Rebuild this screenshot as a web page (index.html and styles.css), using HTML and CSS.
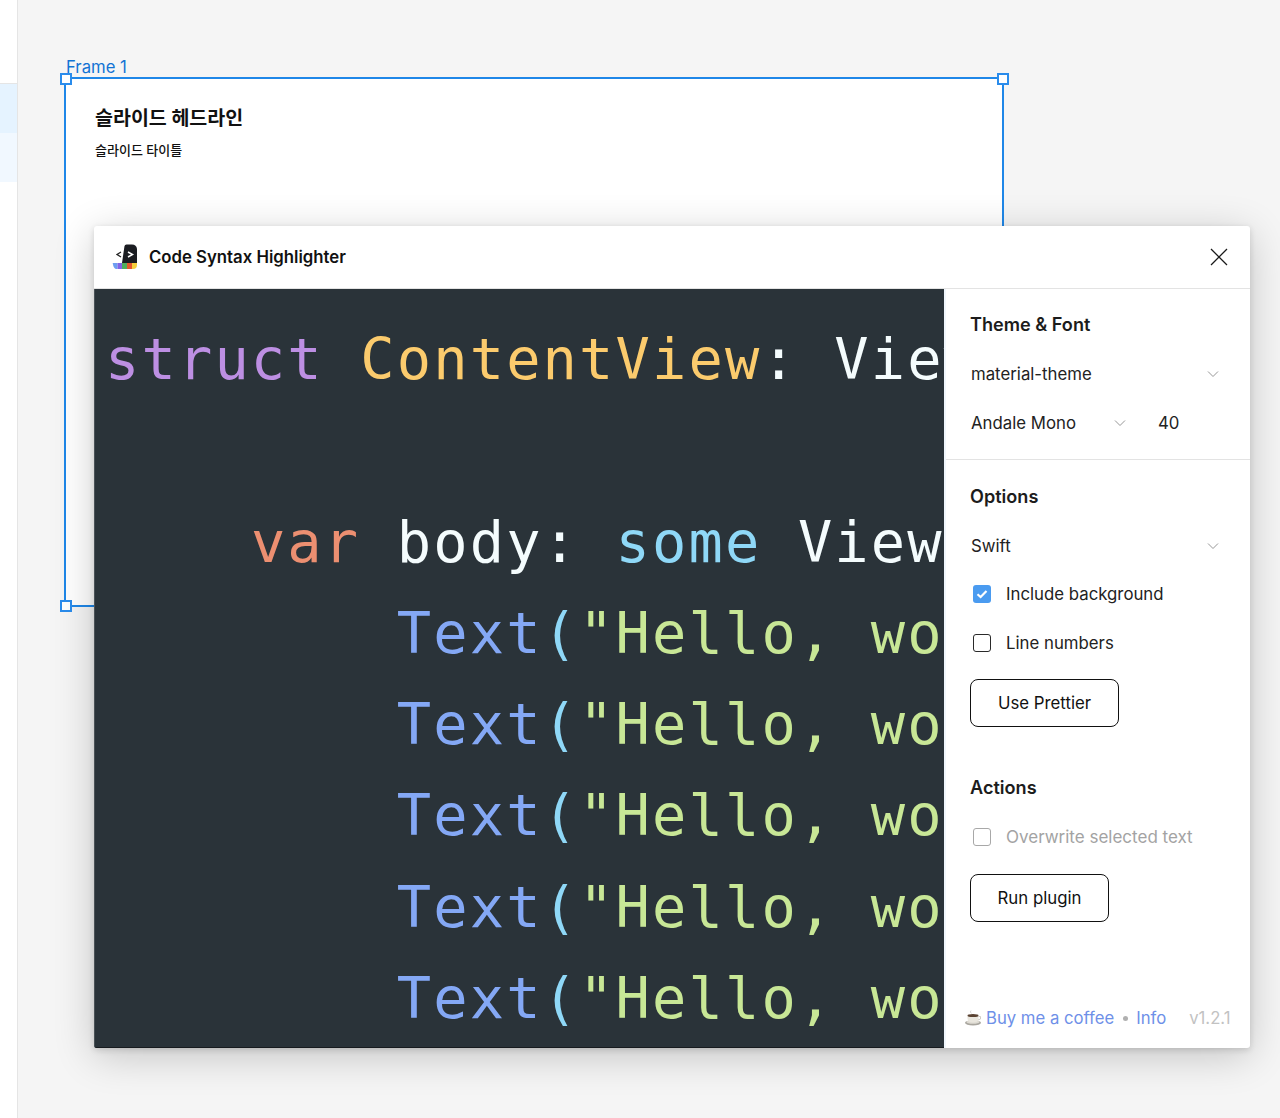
FILE: index.html
```html
<!DOCTYPE html>
<html lang="ko">
<head>
<meta charset="utf-8">
<title>Code Syntax Highlighter</title>
<link rel="stylesheet" href="styles.css">
</head>
<body>
<aside class="sidebar">
  <div class="side-top"></div>
  <div class="side-row side-row-a"></div>
  <div class="side-row side-row-b"></div>
</aside>
<main class="canvas">
  <section class="frame">
    <span class="frame-label">Frame 1</span>
    <span class="handle handle-tl"></span>
    <span class="handle handle-tr"></span>
    <span class="handle handle-bl"></span>
    <h1 class="slide-title">슬라이드 헤드라인</h1>
    <p class="slide-sub">슬라이드 타이틀</p>
  </section>
  <section class="plugin">
    <header class="plugin-head">
      <svg class="logo" width="26" height="26" viewBox="0 0 26 26" aria-hidden="true">
        <path d="M10 19 12.500 2Q12.800 .5 14.500 .5H20Q24.500 .5 25 5V19Z" fill="#1b1d22"/>
        <path d="M.7 19H5.500V25H4.500Q1.500 25 .7 19Z" fill="#6d9ef0"/>
        <rect x="5.500" y="19" width="4.500" height="6" fill="#8164e6"/>
        <rect x="10" y="19" width="5" height="6" fill="#4fae5c"/>
        <rect x="15" y="19" width="5" height="6" fill="#e4572e"/>
        <path d="M20 19H25V21Q25 25 21 25H20Z" fill="#f6cf3c"/>
        <path d="M9 8 5 10.500 9 13" fill="none" stroke="#222" stroke-width="1.300"/>
        <path d="M16 8 20.500 10.500 16 13" fill="none" stroke="#fff" stroke-width="1.500"/>
      </svg>
      <span class="plugin-name">Code Syntax Highlighter</span>
      <svg class="close" width="20" height="20" viewBox="0 0 20 20" aria-hidden="true">
        <path d="M2 2 18 18M18 2 2 18" fill="none" stroke="#1a1a1a" stroke-width="1.300"/>
      </svg>
    </header>
    <div class="plugin-body">
      <pre class="code"><code><span class="kw">struct</span> <span class="ty">ContentView</span><span class="pl">: View {</span>

    <span class="var">var</span> <span class="pl">body:</span> <span class="cy">some</span> <span class="pl">View {</span>
        <span class="fn">Text</span><span class="cy">(</span><span class="str">"Hello, world!"</span><span class="cy">)</span>
        <span class="fn">Text</span><span class="cy">(</span><span class="str">"Hello, world!"</span><span class="cy">)</span>
        <span class="fn">Text</span><span class="cy">(</span><span class="str">"Hello, world!"</span><span class="cy">)</span>
        <span class="fn">Text</span><span class="cy">(</span><span class="str">"Hello, world!"</span><span class="cy">)</span>
        <span class="fn">Text</span><span class="cy">(</span><span class="str">"Hello, world!"</span><span class="cy">)</span></code></pre>
      <div class="panel">
        <div class="group group-theme">
          <h2 class="group-title">Theme &amp; Font</h2>
          <div class="select-row select-full">
            <span>material-theme</span>
            <svg class="chev" width="12" height="8" viewBox="0 0 12 8" aria-hidden="true"><path d="M1 1.500 6 6.500 11 1.500" fill="none" stroke="#979797" stroke-width="1"/></svg>
          </div>
          <div class="select-row font-row">
            <span class="font-name">Andale Mono</span>
            <svg class="chev" width="12" height="8" viewBox="0 0 12 8" aria-hidden="true"><path d="M1 1.500 6 6.500 11 1.500" fill="none" stroke="#979797" stroke-width="1"/></svg>
            <span class="font-size">40</span>
          </div>
        </div>
        <div class="group group-options">
          <h2 class="group-title">Options</h2>
          <div class="select-row select-full select-lang">
            <span>Swift</span>
            <svg class="chev" width="12" height="8" viewBox="0 0 12 8" aria-hidden="true"><path d="M1 1.500 6 6.500 11 1.500" fill="none" stroke="#979797" stroke-width="1"/></svg>
          </div>
          <div class="check-row">
            <span class="box box-on">
              <svg width="18" height="18" viewBox="0 0 18 18" aria-hidden="true"><path d="M4.500 9.200 7.600 12 13.500 6" fill="none" stroke="#fff" stroke-width="2.200"/></svg>
            </span>
            <span>Include background</span>
          </div>
          <div class="check-row">
            <span class="box"></span>
            <span>Line numbers</span>
          </div>
          <button class="btn btn-prettier" type="button">Use Prettier</button>
          <h2 class="group-title actions-title">Actions</h2>
          <div class="check-row check-off">
            <span class="box"></span>
            <span>Overwrite selected text</span>
          </div>
          <button class="btn btn-run" type="button">Run plugin</button>
        </div>
        <footer class="panel-foot">
          <svg class="cup" width="18" height="16" viewBox="0 0 18 16" aria-hidden="true">
            <path d="M7 .5Q5.500 2 7.500 3.500" fill="none" stroke="#d8d8d8" stroke-width="1"/>
            <ellipse cx="9" cy="12.800" rx="8" ry="2.700" fill="#a9a69f"/>
            <ellipse cx="9" cy="12" rx="6.500" ry="1.700" fill="#dedbd3"/>
            <path d="M3.500 5.500H14.500V9Q14 12.500 9 12.500 4 12.500 3.500 9Z" fill="#e9e6de"/>
            <path d="M14.500 6.500H16.500V9L14 10" fill="none" stroke="#cfccc4" stroke-width="1"/>
            <ellipse cx="9" cy="5.500" rx="5.500" ry="1.500" fill="#5a4232"/>
          </svg>
          <a class="link" href="#">Buy me a coffee</a>
          <span class="dot"></span>
          <a class="link" href="#">Info</a>
          <span class="version">v1.2.1</span>
        </footer>
      </div>
    </div>
  </section>
</main>
</body>
</html>
```
FILE: styles.css
```css
* { box-sizing: border-box; }
html, body { margin: 0; height: 100%; }
body {
  display: flex;
  height: 1118px;
  overflow: hidden;
  background: #f5f5f5;
  font-family: Inter, "Noto Sans CJK KR", sans-serif;
  color: #1c1c1c;
}
.sidebar {
  flex: 0 0 18px;
  background: #fff;
  border-right: 1px solid #e5e5e5;
  padding-top: 83px;
}
.side-top { height: 1px; background: #e5e5e5; }
.side-row { height: 49px; }
.side-row-a { background: #e5f3ff; }
.side-row-b { background: #f1f8ff; }
.canvas { position: relative; flex: 1; }

.frame {
  position: absolute;
  left: 46px;
  top: 77px;
  width: 940px;
  height: 530px;
  background: #fff;
  border: 2px solid #1f87e8;
  padding: 27px 29px;
}
.frame-label {
  position: absolute;
  left: 0;
  top: -22px;
  font-size: 16.700px;
  line-height: 20px;
  color: #1273d4;
}
.handle {
  position: absolute;
  width: 12px;
  height: 12px;
  background: #fff;
  border: 2px solid #2a8cec;
}
.handle-tl { left: -6px; top: -6px; }
.handle-tr { right: -7px; top: -6px; }
.handle-bl { left: -6px; bottom: -7px; }
.slide-title {
  margin: 0;
  font-size: 19.500px;
  line-height: 24px;
  font-weight: 700;
  color: #111;
}
.slide-sub {
  margin: 11px 0 0;
  font-size: 13px;
  line-height: 18px;
  font-weight: 500;
  color: #111;
}

.plugin {
  position: absolute;
  left: 76px;
  top: 226px;
  width: 1155.500px;
  height: 822px;
  background: #fff;
  border-radius: 3px;
  box-shadow: 0 2px 6px rgba(0,0,0,.14), 0 8px 40px rgba(0,0,0,.2);
  overflow: hidden;
  display: flex;
  flex-direction: column;
}
.plugin-head {
  flex: 0 0 63px;
  display: flex;
  align-items: center;
  padding: 0 20.500px 0 18px;
  border-bottom: 1px solid #e3e3e3;
}
.logo { display: block; }
.plugin-name {
  margin-left: 11px;
  font-size: 16.750px;
  font-weight: 600;
  color: #111;
}
.close { margin-left: auto; }
.plugin-body { flex: 1; display: flex; min-height: 0; }
.code {
  flex: 0 0 850px;
  margin: 0;
  padding: 25px 0 0 10px;
  overflow: hidden;
  background: #2a3339;
  border-left: 1px solid #4a5257;
  border-bottom: 1px solid #171b1f;
  font-family: "DejaVu Sans Mono", monospace;
  font-size: 57px;
  letter-spacing: 2.150px;
  line-height: 91.300px;
  white-space: pre;
}
.kw { color: #bd8fe3; }
.ty { color: #fbcb6d; }
.pl { color: #f4fcfd; }
.var { color: #ec8f71; }
.cy { color: #8fd8f7; }
.fn { color: #84a8f5; }
.str { color: #c8e796; }

.panel {
  flex: 1;
  display: flex;
  flex-direction: column;
  font-size: 16.800px;
  min-width: 0;
  border-left: 2px solid #f0f6fc;
}
.group { padding: 0 24px; }
.group-theme {
  height: 171px;
  padding-top: 21px;
  border-bottom: 1px solid #e3e3e3;
}
.group-theme .select-full { margin-top: 11px; }
.group-options { flex: 1; padding-top: 22px; }
.group-title {
  margin: 0;
  font-size: 18.100px;
  line-height: 28px;
  font-weight: 600;
  color: #1c1c1c;
}
.select-row {
  display: flex;
  align-items: center;
  height: 49px;
  padding-left: 1px;
  color: #222;
}
.select-full { margin-top: 10px; justify-content: space-between; padding-right: 7px; }
.select-lang { margin-top: 12px; height: 47px; }
.font-name { width: 143px; }
.font-size { margin-left: 32px; }
.check-row {
  display: flex;
  align-items: center;
  gap: 15px;
  height: 49px;
  padding-left: 3px;
  color: #222;
}
.box {
  flex: 0 0 18px;
  width: 18px;
  height: 18px;
  border: 1.700px solid #2a2a2a;
  border-radius: 3px;
}
.box-on {
  background: #4a9bf0;
  border: 0;
}
.box-on svg { display: block; }
.btn {
  display: block;
  height: 48px;
  padding: 0;
  background: #fff;
  border: 1.700px solid #111;
  border-radius: 8px;
  font: inherit;
  color: #111;
}
.btn-prettier { width: 149px; margin-top: 12px; }
.btn-run { width: 139px; margin-top: 12.500px; }
.actions-title { margin-top: 46px; }
.check-off { margin-top: 11px; color: #a3a3a3; font-size: 17px; }
.check-off .box { border-color: #a8a8a8; }
.panel-foot {
  flex: 0 0 60px;
  display: flex;
  align-items: center;
  padding: 0 19px 0 18px;
  font-size: 16.700px;
}
.cup { flex: none; margin-right: 4px; }
.link { color: #6e90e8; text-decoration: none; }
.dot {
  width: 5px;
  height: 5px;
  margin: 0 8.500px;
  border-radius: 50%;
  background: #b0b0b0;
}
.version { margin-left: auto; color: #c2c2c2; }
```
